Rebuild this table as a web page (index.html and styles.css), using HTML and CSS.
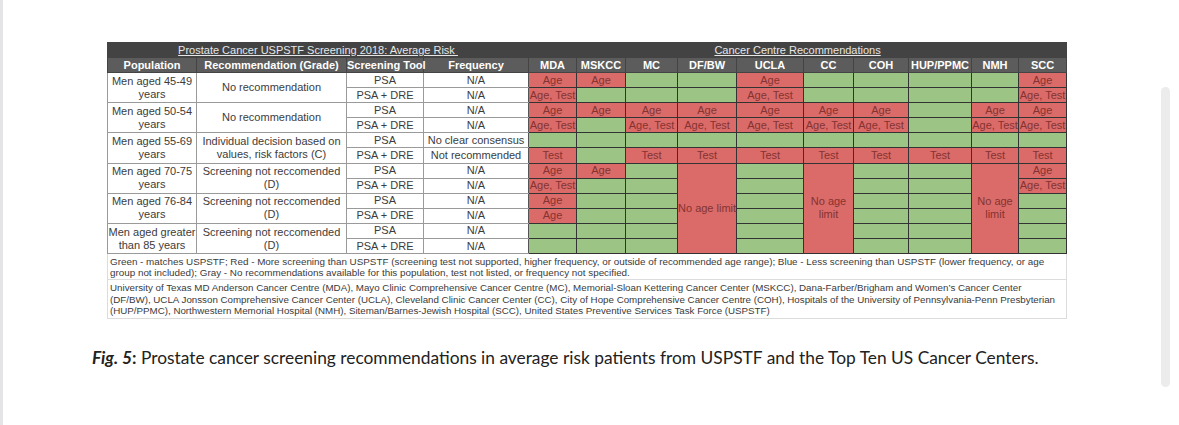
FILE: index.html
```html
<!DOCTYPE html>
<html lang="en">
<head>
<meta charset="utf-8">
<title>Fig. 5</title>
<link rel="stylesheet" href="styles.css">
</head>
<body>
<div class="page">
  <div class="edge"></div>
  <main class="main">
    <div class="figure">
      <table class="grid">
        <colgroup>
          <col class="c-pop"><col class="c-rec"><col class="c-tool"><col class="c-freq">
          <col class="c-mda"><col class="c-msk"><col class="c-mc"><col class="c-df"><col class="c-ucla">
          <col class="c-cc"><col class="c-coh"><col class="c-hup"><col class="c-nmh"><col class="c-scc">
        </colgroup>
        <thead>
          <tr class="title">
            <th colspan="4" class="t-left"><span>Prostate Cancer USPSTF Screening 2018: Average Risk&nbsp;</span></th>
            <th colspan="10" class="t-right"><span>Cancer Centre Recommendations</span></th>
          </tr>
          <tr class="head">
            <th>Population</th><th>Recommendation (Grade)</th><th>Screening Tool</th><th>Frequency</th>
            <th>MDA</th><th>MSKCC</th><th>MC</th><th>DF/BW</th><th>UCLA</th><th>CC</th><th>COH</th><th>HUP/PPMC</th><th>NMH</th><th>SCC</th>
          </tr>
        </thead>
        <tbody>
          <tr>
            <td rowspan="2" class="lt">Men aged 45-49 years</td><td rowspan="2" class="lt">No recommendation</td><td class="lt">PSA</td><td class="lt lr">N/A</td>
            <td class="r">Age</td><td class="r">Age</td><td class="g"></td><td class="g"></td><td class="r">Age</td><td class="g"></td><td class="g"></td><td class="g"></td><td class="g"></td><td class="r">Age</td>
          </tr>
          <tr>
            <td class="lt">PSA + DRE</td><td class="lt lr">N/A</td>
            <td class="r">Age, Test</td><td class="g"></td><td class="g"></td><td class="g"></td><td class="r">Age, Test</td><td class="g"></td><td class="g"></td><td class="g"></td><td class="g"></td><td class="r">Age, Test</td>
          </tr>
          <tr>
            <td rowspan="2" class="lt">Men aged 50-54 years</td><td rowspan="2" class="lt">No recommendation</td><td class="lt">PSA</td><td class="lt lr">N/A</td>
            <td class="r">Age</td><td class="r">Age</td><td class="r">Age</td><td class="r">Age</td><td class="r">Age</td><td class="r">Age</td><td class="r">Age</td><td class="g"></td><td class="r">Age</td><td class="r">Age</td>
          </tr>
          <tr>
            <td class="lt">PSA + DRE</td><td class="lt lr">N/A</td>
            <td class="r">Age, Test</td><td class="g"></td><td class="r">Age, Test</td><td class="r">Age, Test</td><td class="r">Age, Test</td><td class="r">Age, Test</td><td class="r">Age, Test</td><td class="g"></td><td class="r">Age, Test</td><td class="r">Age, Test</td>
          </tr>
          <tr>
            <td rowspan="2" class="lt">Men aged 55-69 years</td><td rowspan="2" class="lt">Individual decision based on values, risk factors (C)</td><td class="lt">PSA</td><td class="lt lr">No clear consensus</td>
            <td class="g"></td><td class="g"></td><td class="g"></td><td class="g"></td><td class="g"></td><td class="g"></td><td class="g"></td><td class="g"></td><td class="g"></td><td class="g"></td>
          </tr>
          <tr>
            <td class="lt">PSA + DRE</td><td class="lt lr">Not recommended</td>
            <td class="r">Test</td><td class="g"></td><td class="r">Test</td><td class="r">Test</td><td class="r">Test</td><td class="r">Test</td><td class="r">Test</td><td class="r">Test</td><td class="r">Test</td><td class="r">Test</td>
          </tr>
          <tr>
            <td rowspan="2" class="lt">Men aged 70-75 years</td><td rowspan="2" class="lt">Screening not reccomended (D)</td><td class="lt">PSA</td><td class="lt lr">N/A</td>
            <td class="r">Age</td><td class="r">Age</td><td class="g"></td><td rowspan="6" class="r">No age limit</td><td class="g"></td><td rowspan="6" class="r">No age<br>limit</td><td class="g"></td><td class="g"></td><td rowspan="6" class="r">No age<br>limit</td><td class="r">Age</td>
          </tr>
          <tr>
            <td class="lt">PSA + DRE</td><td class="lt lr">N/A</td>
            <td class="r">Age, Test</td><td class="g"></td><td class="g"></td><td class="g"></td><td class="g"></td><td class="g"></td><td class="r">Age, Test</td>
          </tr>
          <tr>
            <td rowspan="2" class="lt">Men aged 76-84 years</td><td rowspan="2" class="lt">Screening not reccomended (D)</td><td class="lt">PSA</td><td class="lt lr">N/A</td>
            <td class="r">Age</td><td class="g"></td><td class="g"></td><td class="g"></td><td class="g"></td><td class="g"></td><td class="g"></td>
          </tr>
          <tr>
            <td class="lt">PSA + DRE</td><td class="lt lr">N/A</td>
            <td class="r">Age</td><td class="g"></td><td class="g"></td><td class="g"></td><td class="g"></td><td class="g"></td><td class="g"></td>
          </tr>
          <tr>
            <td rowspan="2" class="lt">Men aged greater than 85 years</td><td rowspan="2" class="lt">Screening not reccomended (D)</td><td class="lt">PSA</td><td class="lt lr">N/A</td>
            <td class="g"></td><td class="g"></td><td class="g"></td><td class="g"></td><td class="g"></td><td class="g"></td><td class="g"></td>
          </tr>
          <tr>
            <td class="lt">PSA + DRE</td><td class="lt lr">N/A</td>
            <td class="g"></td><td class="g"></td><td class="g"></td><td class="g"></td><td class="g"></td><td class="g"></td><td class="g"></td>
          </tr>
        </tbody>
      </table>
      <div class="legend">
        <p class="legend-block first">Green - matches USPSTF; Red - More screening than USPSTF (screening test not supported, higher frequency, or outside of recommended age range); Blue - Less screening than USPSTF (lower frequency, or age group not included); Gray - No recommendations available for this population, test not listed, or frequency not specified.</p>
        <p class="legend-block second">University of Texas MD Anderson Cancer Centre (MDA), Mayo Clinic Comprehensive Cancer Centre (MC), Memorial-Sloan Kettering Cancer Center (MSKCC), Dana-Farber/Brigham and Women’s Cancer Center (DF/BW), UCLA Jonsson Comprehensive Cancer Center (UCLA), Cleveland Clinic Cancer Center (CC), City of Hope Comprehensive Cancer Centre (COH), Hospitals of the University of Pennsylvania-Penn Presbyterian (HUP/PPMC), Northwestern Memorial Hospital (NMH), Siteman/Barnes-Jewish Hospital (SCC), United States Preventive Services Task Force (USPSTF)</p>
      </div>
    </div>
    <p class="caption"><b><i>Fig. 5</i>:</b> Prostate cancer screening recommendations in average risk patients from USPSTF and the Top Ten US Cancer Centers.</p>
  </main>
  <div class="scrollbar"></div>
</div>
</body>
</html>
```
FILE: styles.css
```css
html, body {
  margin: 0;
  padding: 0;
  background: #ffffff;
  height: 100%;
  overflow: hidden;
}

.page {
  display: flex;
  height: 425px;
  position: relative;
}

.edge {
  width: 3px;
  flex: 0 0 3px;
  background: #e4e4e6;
}

.main {
  flex: 1;
  padding-top: 42px;
}

.figure {
  margin-left: 104px;
  width: 960px;
  font-family: "Liberation Sans", Arial, sans-serif;
}

.grid {
  border-collapse: collapse;
  table-layout: fixed;
  width: 960px;
  font-size: 11px;
  color: #3a3a3a;
}

.c-pop { width: 89px; }
.c-rec { width: 150px; }
.c-tool { width: 77px; }
.c-freq { width: 105px; }
.c-mda { width: 48px; }
.c-msk { width: 49px; }
.c-mc { width: 52px; }
.c-df { width: 59px; }
.c-ucla { width: 67px; }
.c-cc { width: 50px; }
.c-coh { width: 55px; }
.c-hup { width: 63px; }
.c-nmh { width: 47px; }
.c-scc { width: 48px; }

.grid th, .grid td {
  padding: 0;
  height: 14px;
  line-height: 13px;
  text-align: center;
  vertical-align: middle;
  white-space: nowrap;
  overflow: visible;
}

.grid tbody tr {
  height: 15.1px;
}

.title th {
  background: #434343;
  color: #e6e6e6;
  font-weight: normal;
  font-size: 11px;
  border: 1px solid #434343;
}

.title th span {
  text-decoration: underline;
}

.title .t-right {
  border-left: 1px solid #7a7a7a;
}

.head th {
  background: #5c5c5c;
  color: #ffffff;
  font-weight: bold;
  border: 1px solid #444444;
}

.lt {
  border: 1px solid #9a9a9a;
  color: #3c3c3c;
  white-space: normal !important;
}

.lr {
  border-right: 1px solid #555555 !important;
}

.r {
  background: #db6b69;
  color: #843331;
  border: 1px solid #333333;
}

.g {
  background: #9cc485;
  border: 1px solid #333333;
}

.legend {
  border: 1px solid #dcdcdc;
  border-top: none;
  color: #3a3a3a;
}

.legend-block {
  margin: 0;
  padding: 0 2px;
}

.legend-block.first {
  font-size: 9.85px;
  line-height: 11px;
  padding-top: 2px;
  padding-bottom: 1px;
  padding-right: 18px;
}

.legend-block.second {
  font-size: 9.75px;
  border-top: 1px solid #dcdcdc;
  line-height: 11.4px;
  padding-top: 2px;
  padding-bottom: 2px;
}

.caption {
  margin: 28px 0 0 89px;
  font-family: Lato, "Noto Sans", sans-serif;
  font-size: 17.35px;
  color: #222222;
  white-space: nowrap;
}

.caption b {
  font-weight: bold;
}

.scrollbar {
  position: absolute;
  right: 9px;
  top: 87px;
  width: 9px;
  height: 300px;
  border-radius: 5px;
  background: #ececec;
}
```
